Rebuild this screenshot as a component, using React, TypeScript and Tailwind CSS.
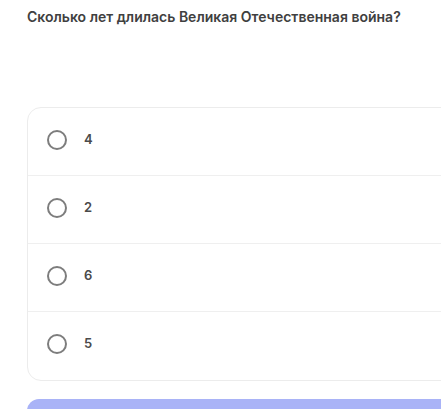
import React from "react";

const options = ["4", "2", "6", "5"];

export default function App() {
  return (
    <div className="w-[441px] h-[409px] overflow-hidden bg-white" style={{ fontFamily: "Inter, 'Noto Sans', sans-serif" }}>
      <div className="pl-[27px] pt-[8px]">
        <h1 className="text-[14px] leading-[17px] font-semibold text-[#404040] whitespace-nowrap">
          Сколько лет длилась Великая Отечественная война?
        </h1>
        <div className="mt-[82px] w-[440px] rounded-[14px] border border-[#ececec] bg-white">
          {options.map((o, i) => (
            <div
              key={o}
              className={`flex items-center h-[68px] pl-[19px] pb-[4px] ${i < options.length - 1 ? "border-b border-[#efefef]" : ""}`}
            >
              <div className="w-[20px] h-[20px] rounded-full border-2 border-[#7d7d7d]" />
              <span className="ml-[17px] text-[13px] font-semibold text-[#4a4a4a]">{o}</span>
            </div>
          ))}
        </div>
        <div className="mt-[18px] w-[440px] h-[40px] rounded-[12px] bg-[#a9b3f7]" />
      </div>
    </div>
  );
}
